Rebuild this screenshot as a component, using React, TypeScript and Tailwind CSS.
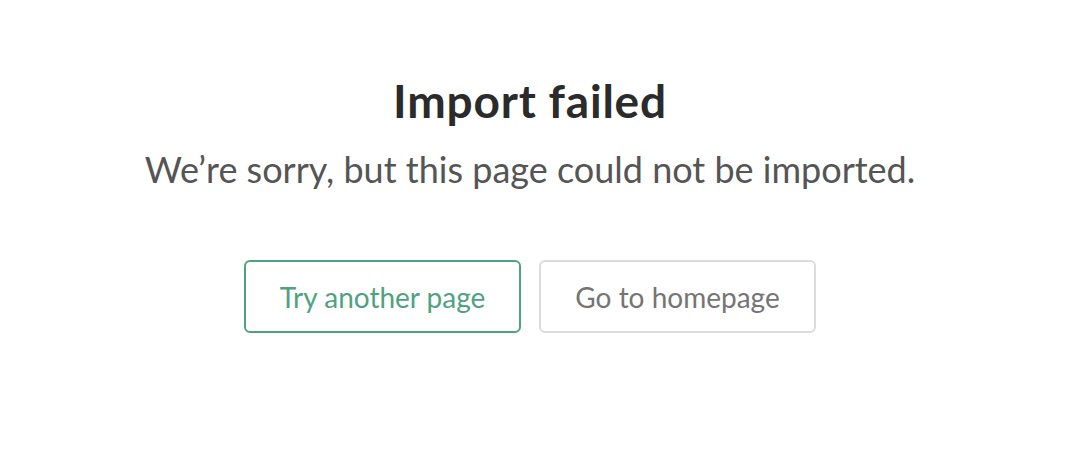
export default function App() {
  return (
    <div className="flex h-[466px] w-full flex-col items-center bg-white pr-[14px] pt-[73px] font-['Lato',sans-serif]">
      <h1 className="text-[46px] font-bold leading-[56px] tracking-[0.8px] text-[#2b2b2b]">Import failed</h1>
      <p className="mt-[18px] text-[36px] leading-[44px] text-[#555555]">
        We’re sorry, but this page could not be imported.
      </p>
      <div className="mt-[69px] flex gap-[18px]">
        <button className="h-[73px] w-[277px] rounded-[6px] border-2 border-[#4fa27f] text-[28px] text-[#4fa27f]">
          Try another page
        </button>
        <button className="h-[73px] w-[277px] rounded-[6px] border-2 border-[#dcdcdc] text-[28px] text-[#757575]">
          Go to homepage
        </button>
      </div>
    </div>
  )
}
